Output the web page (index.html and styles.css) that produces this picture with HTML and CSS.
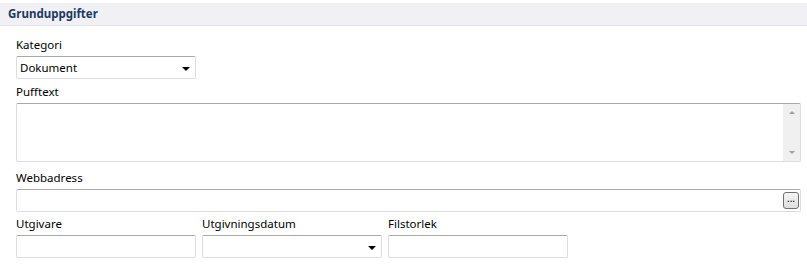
FILE: index.html
```html
<!DOCTYPE html>
<html>
<head>
<meta charset="utf-8">
<link rel="stylesheet" href="styles.css">
</head>
<body>
<div class="panel">
  <div class="header">Grunduppgifter</div>
  <div class="body">
    <div class="field">
      <div class="label">Kategori</div>
      <div class="box select narrow"><span class="value">Dokument</span><span class="caret"></span></div>
    </div>
    <div class="field f-puff">
      <div class="label">Pufftext</div>
      <div class="box textarea">
        <div class="scroll">
          <span class="arrow up"></span>
          <span class="arrow down"></span>
        </div>
      </div>
    </div>
    <div class="field f-url">
      <div class="label">Webbadress</div>
      <div class="box url"><span class="dots">...</span></div>
    </div>
    <div class="row">
      <div class="field">
        <div class="label">Utgivare</div>
        <div class="box narrow"></div>
      </div>
      <div class="field">
        <div class="label">Utgivningsdatum</div>
        <div class="box select narrow"><span class="value"></span><span class="caret"></span></div>
      </div>
      <div class="field">
        <div class="label">Filstorlek</div>
        <div class="box narrow"></div>
      </div>
    </div>
  </div>
</div>
</body>
</html>
```
FILE: styles.css
```css
html, body {
  margin: 0;
  padding: 0;
  background: #ffffff;
}
body {
  font-family: "Noto Sans", "Open Sans", sans-serif;
  font-size: 11.5px;
  color: #000;
}
.panel {
  padding-top: 3px;
}
.header {
  height: 22px;
  line-height: 21px;
  background: #f0f0f5;
  border-bottom: 1px solid #e2e2ea;
  padding-left: 8px;
  font-weight: bold;
  font-size: 11.5px;
  color: #1b3a60;
}
.body {
  padding: 10px 6px 0 16px;
  display: flex;
  flex-direction: column;
}
.field {
  display: flex;
  flex-direction: column;
}
.f-puff {
  margin-top: 4px;
}
.f-url {
  margin-top: 7px;
}
.row {
  display: flex;
  gap: 6px;
  margin-top: 3px;
}
.label {
  height: 16px;
  line-height: 17px;
  margin-bottom: 4px;
}
.box {
  box-sizing: border-box;
  height: 23px;
  border: 1px solid #dcdde3;
  border-top-color: #a8a8ad;
  border-radius: 2px;
  background: #fff;
  position: relative;
}
.narrow {
  width: 180px;
}
.select {
  display: flex;
  align-items: center;
  justify-content: space-between;
  padding: 0 5px 0 3px;
}
.value {
  line-height: 20px;
}
.caret {
  width: 0;
  height: 0;
  border-left: 4px solid transparent;
  border-right: 4px solid transparent;
  border-top: 4px solid #000;
  margin-top: 2px;
}
.textarea {
  height: 59px;
  display: flex;
  justify-content: flex-end;
}
.scroll {
  width: 17px;
  background: #f0f0f0;
  display: flex;
  flex-direction: column;
  justify-content: space-between;
  align-items: center;
  padding: 7px 0 7px;
  box-sizing: border-box;
}
.arrow {
  width: 0;
  height: 0;
  border-left: 3px solid transparent;
  border-right: 3px solid transparent;
}
.arrow.up {
  border-bottom: 3px solid #a0a0a0;
}
.arrow.down {
  border-top: 3px solid #a0a0a0;
}
.url {
  display: flex;
  justify-content: flex-end;
  align-items: center;
  padding-right: 1px;
}
.dots {
  box-sizing: border-box;
  width: 16px;
  height: 17px;
  border: 1px solid #707070;
  border-radius: 3px;
  background: linear-gradient(#f6f6f6, #dedede);
  font-size: 10px;
  line-height: 11px;
  text-align: center;
  color: #000;
}
```
